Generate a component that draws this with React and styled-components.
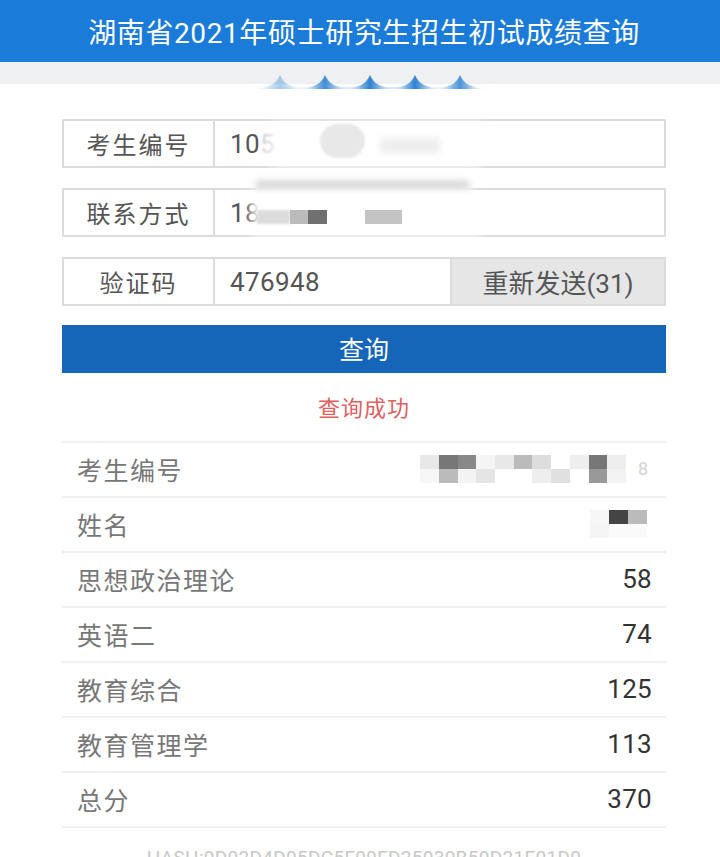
import React from "react";
import styled, { createGlobalStyle } from "styled-components";

const Global = createGlobalStyle`
  html, body { margin: 0; padding: 0; background: #fff; }
  body { font-family: Roboto, "Noto Sans CJK SC", "Noto Sans", sans-serif; overflow: hidden; }
  * { box-sizing: border-box; }
`;

const Page = styled.div`
  width: 720px;
  height: 857px;
  overflow: hidden;
  background: #fff;
`;

const Header = styled.header`
  height: 62px;
  background: #1a7bd8;
  color: #fff;
  display: flex;
  align-items: center;
  justify-content: center;
  font-size: 28px;
  letter-spacing: 0.6px;
  padding-left: 8px;
`;

const Band = styled.div`
  height: 28px;
  background: linear-gradient(#eef0f2 0 22px, #fff 22px);
  display: flex;
  justify-content: center;
  align-items: flex-end;
  padding-left: 26px;
`;

const Main = styled.main`
  margin-left: 62px;
  width: 604px;
  padding-top: 29px;
  position: relative;
`;

const Form = styled.div`
  display: flex;
  flex-direction: column;
  gap: 20px;
`;

const FieldRow = styled.div`
  display: flex;
  height: 49px;
  border: 2px solid #dcdcdc;
  font-size: 24px;
  color: #555;
`;

const Label = styled.div`
  width: 151px;
  border-right: 2px solid #dcdcdc;
  display: flex;
  align-items: center;
  justify-content: center;
  letter-spacing: 2px;
`;

const Value = styled.div`
  flex: 1;
  display: flex;
  align-items: center;
  padding-left: 15px;
  font-size: 26px;
  letter-spacing: 0.4px;
  color: #555;
`;

const Resend = styled.div`
  width: 214px;
  background: #e6e6e6;
  border-left: 2px solid #dcdcdc;
  display: flex;
  align-items: center;
  justify-content: center;
  color: #555;
  font-size: 26px;
`;

const Submit = styled.div`
  margin-top: 19px;
  height: 48px;
  background: #1566b8;
  color: #fff;
  font-size: 25px;
  display: flex;
  align-items: center;
  justify-content: center;
  padding-bottom: 3px;
`;

const Status = styled.div`
  height: 68px;
  display: flex;
  align-items: center;
  justify-content: center;
  color: #e0615e;
  font-size: 22px;
  letter-spacing: 1px;
  padding-bottom: 2px;
`;

const List = styled.div`
  border-top: 2px solid #f2f2f2;
`;

const Item = styled.div`
  height: 55px;
  border-bottom: 2px solid #f0f0f0;
  display: flex;
  align-items: center;
  justify-content: space-between;
  padding: 0 14px 2px 15px;
  font-size: 25px;
`;

const ItemLabel = styled.span`
  color: #777;
  letter-spacing: 1.5px;
`;

const ItemValue = styled.span`
  color: #333;
  font-size: 26px;
  letter-spacing: 0.3px;
`;

const Hint = styled.span`
  color: #d4d4d4;
  font-size: 18px;
`;

const Hash = styled.div`
  margin-top: 18px;
  text-align: center;
  color: #c8c8c8;
  font-size: 19px;
  letter-spacing: 0.3px;
`;

const Faded = styled.span`
  color: #ccc;
  filter: blur(1px);
`;

const Blob = styled.div`
  position: absolute;
  left: ${(p) => p.x}px;
  top: ${(p) => p.y}px;
  width: ${(p) => p.w}px;
  height: ${(p) => p.h}px;
  background: ${(p) => p.c};
  border-radius: ${(p) => p.r || 0}px;
  filter: blur(${(p) => p.b || 0}px);
`;

const MosaicGrid = styled.div`
  display: grid;
  grid-template-columns: repeat(${(p) => p.cols}, ${(p) => p.cw}px);
  grid-auto-rows: ${(p) => p.ch}px;
  margin-right: ${(p) => p.mr || 0}px;
`;

const Cell = styled.div`
  background: ${(p) => p.c};
`;

const Mosaic = ({ rows, cw, ch, mr }) => (
  <MosaicGrid cols={rows[0].length} cw={cw} ch={ch} mr={mr}>
    {rows.flat().map((c, i) => (
      <Cell key={i} c={c} />
    ))}
  </MosaicGrid>
);

const RightGroup = styled.div`
  display: flex;
  align-items: center;
  gap: 12px;
  margin-right: 4px;
`;

const peaks = [
  { cx: 32, o: 0.4 },
  { cx: 77, o: 0.9 },
  { cx: 122, o: 1 },
  { cx: 167, o: 1 },
  { cx: 212, o: 0.85 },
];

const Peaks = () => (
  <svg width="250" height="16" viewBox="0 0 250 16">
    <defs>
      <linearGradient id="pk" x1="0" y1="0" x2="1" y2="0">
        <stop offset="0" stopColor="#d6e7f7" stopOpacity="0" />
        <stop offset="0.3" stopColor="#7fb4e6" />
        <stop offset="0.5" stopColor="#2f82d3" />
        <stop offset="0.7" stopColor="#7fb4e6" />
        <stop offset="1" stopColor="#d6e7f7" stopOpacity="0" />
      </linearGradient>
      <linearGradient id="ln" x1="0" y1="0" x2="1" y2="0">
        <stop offset="0" stopColor="#c9def3" stopOpacity="0" />
        <stop offset="0.5" stopColor="#c9def3" stopOpacity="0.8" />
        <stop offset="1" stopColor="#c9def3" stopOpacity="0" />
      </linearGradient>
    </defs>
    <rect x="0" y="13" width="250" height="2" fill="url(#ln)" />
    {peaks.map(({ cx, o }) => (
      <path
        key={cx}
        d={`M${cx - 22} 15 L${cx - 9} 11 Q${cx - 3} 8 ${cx} 1 Q${cx + 3} 8 ${cx + 9} 11 L${cx + 22} 15 Z`}
        fill="url(#pk)"
        opacity={o}
      />
    ))}
  </svg>
);

const scores = [
  ["思想政治理论", "58"],
  ["英语二", "74"],
  ["教育综合", "125"],
  ["教育管理学", "113"],
  ["总分", "370"],
];

export default function App() {
  return (
    <Page>
      <Global />
      <Header>湖南省2021年硕士研究生招生初试成绩查询</Header>
      <Band>
        <Peaks />
      </Band>
      <Main>
        <Form>
          <FieldRow>
            <Label>考生编号</Label>
            <Value>
              10<Faded>5</Faded>
            </Value>
          </FieldRow>
          <FieldRow>
            <Label>联系方式</Label>
            <Value>
              18<Faded>5</Faded>
            </Value>
          </FieldRow>
          <FieldRow>
            <Label>验证码</Label>
            <Value>476948</Value>
            <Resend>重新发送(31)</Resend>
          </FieldRow>
        </Form>
        <Blob x={210} y={34} w={210} h={42} c="#fff" b={6} />
        <Blob x={258} y={34} w={45} h={34} c="#e8e8e8" r={22} b={1} />
        <Blob x={318} y={48} w={60} h={15} c="#eeeeee" b={3} />
        <Blob x={193} y={94} w={215} h={24} c="#fff" b={5} />
        <Blob x={193} y={90} w={215} h={10} c="#d9d9d9" b={3} r={5} />
        <Blob x={190} y={105} w={230} h={40} c="#fff" b={6} />
        <Blob x={195} y={120} w={33} h={14} c="#dcdcdc" b={1} />
        <Blob x={228} y={120} w={18} h={14} c="#bbbbbb" />
        <Blob x={246} y={120} w={19} h={14} c="#707070" />
        <Blob x={303} y={120} w={37} h={14} c="#c4c4c4" />
        <Submit>查询</Submit>
        <Status>查询成功</Status>
        <List>
          <Item>
            <ItemLabel>考生编号</ItemLabel>
            <RightGroup>
              <Mosaic
                cw={18.7}
                ch={14}
                rows={[
                  ["#e8e8e8", "#777", "#888", "#f5f5f5", "#e8e8e8", "#bbb", "#ddd", "#fff", "#eee", "#777", "#eee"],
                  ["#f7f7f7", "#bbb", "#f3f3f3", "#e5e5e5", "#fff", "#fff", "#eee", "#e0e0e0", "#fff", "#999", "#f3f3f3"],
                ]}
              />
              <Hint>8</Hint>
            </RightGroup>
          </Item>
          <Item>
            <ItemLabel>姓名</ItemLabel>
            <Mosaic
              cw={19}
              ch={14}
              mr={5}
              rows={[
                ["#f7f7f7", "#444", "#bbb"],
                ["#f5f5f5", "#fafafa", "#fafafa"],
              ]}
            />
          </Item>
          {scores.map(([k, v]) => (
            <Item key={k}>
              <ItemLabel>{k}</ItemLabel>
              <ItemValue>{v}</ItemValue>
            </Item>
          ))}
        </List>
        <Hash>HASH:0D02D4D05DC5F09FD25030B50D21E01D0</Hash>
      </Main>
    </Page>
  );
}
